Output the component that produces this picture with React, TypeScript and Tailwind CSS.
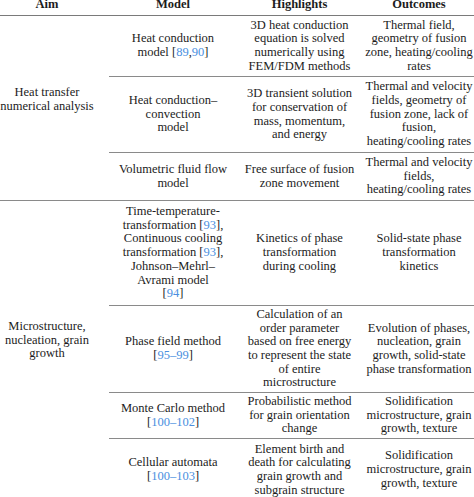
import type { ReactNode } from "react";

const serif = { fontFamily: '"Liberation Serif", "Times New Roman", serif' };

function Ref({ children }: { children: ReactNode }) {
  return <span className="text-[#4a8fe0]">{children}</span>;
}

interface Row {
  h: string;
  model: ReactNode;
  highlights: string[];
  outcomes: string[];
}

const lines = (items: ReactNode[]) =>
  items.map((l, i) => (
    <span key={i} className="block">
      {l}
    </span>
  ));

const groupOne: Row[] = [
  {
    h: "h-[61px]",
    model: lines([
      "Heat conduction",
      <>
        model [<Ref>89</Ref>,<Ref>90</Ref>]
      </>,
    ]),
    highlights: ["3D heat conduction", "equation is solved", "numerically using", "FEM/FDM methods"],
    outcomes: ["Thermal field,", "geometry of fusion", "zone, heating/cooling", "rates"],
  },
  {
    h: "h-[76px]",
    model: lines(["Heat conduction–", "convection", "model"]),
    highlights: ["3D transient solution", "for conservation of", "mass, momentum,", "and energy"],
    outcomes: [
      "Thermal and velocity",
      "fields, geometry of",
      "fusion zone, lack of",
      "fusion,",
      "heating/cooling rates",
    ],
  },
  {
    h: "h-[48px]",
    model: lines(["Volumetric fluid flow", "model"]),
    highlights: ["Free surface of fusion", "zone movement"],
    outcomes: ["Thermal and velocity", "fields,", "heating/cooling rates"],
  },
];

const groupTwo: Row[] = [
  {
    h: "h-[105px]",
    model: lines([
      "Time-temperature-",
      <>
        transformation [<Ref>93</Ref>],
      </>,
      "Continuous cooling",
      <>
        transformation [<Ref>93</Ref>],
      </>,
      "Johnson–Mehrl–",
      "Avrami model",
      <>
        [<Ref>94</Ref>]
      </>,
    ]),
    highlights: ["Kinetics of phase", "transformation", "during cooling"],
    outcomes: ["Solid-state phase", "transformation", "kinetics"],
  },
  {
    h: "h-[87px]",
    model: lines([
      "Phase field method",
      <>
        [<Ref>95–99</Ref>]
      </>,
    ]),
    highlights: [
      "Calculation of an",
      "order parameter",
      "based on free energy",
      "to represent the state",
      "of entire",
      "microstructure",
    ],
    outcomes: ["Evolution of phases,", "nucleation, grain", "growth, solid-state", "phase transformation"],
  },
  {
    h: "h-[46px]",
    model: lines([
      "Monte Carlo method",
      <>
        [<Ref>100–102</Ref>]
      </>,
    ]),
    highlights: ["Probabilistic method", "for grain orientation", "change"],
    outcomes: ["Solidification", "microstructure, grain", "growth, texture"],
  },
  {
    h: "h-[62px]",
    model: lines([
      "Cellular automata",
      <>
        [<Ref>100–103</Ref>]
      </>,
    ]),
    highlights: ["Element birth and", "death for calculating", "grain growth and", "subgrain structure"],
    outcomes: ["Solidification", "microstructure, grain", "growth, texture"],
  },
];

const cell = "align-middle text-center whitespace-nowrap p-0";

function Group({ aim, rows, aimPad, last }: { aim: string[]; rows: Row[]; aimPad: string; last?: boolean }) {
  return (
    <>
      {rows.map((row, i) => {
        const border = i === rows.length - 1 && last ? "" : "border-b border-[#8a8a8a]";
        return (
          <tr key={i}>
            {i === 0 && (
              <td
                rowSpan={rows.length}
                className={`${cell} align-top ${aimPad} ${last ? "" : "border-b border-[#8a8a8a]"}`}
              >
                {lines(aim)}
              </td>
            )}
            <td className={`${cell} ${row.h} ${border}`}>{row.model}</td>
            <td className={`${cell} ${row.h} ${border}`}>{lines(row.highlights)}</td>
            <td className={`${cell} ${row.h} ${border}`}>{lines(row.outcomes)}</td>
          </tr>
        );
      })}
    </>
  );
}

export default function App() {
  return (
    <div className="w-[474px] h-[497px] overflow-hidden bg-white">
      <table
        style={serif}
        className="-ml-[15px] -mt-[2px] border-separate border-spacing-0 table-fixed w-[491px] text-[12.5px] leading-[13.7px] text-[#1c1c1c]"
      >
        <colgroup>
          <col className="w-[124px]" />
          <col className="w-[128px]" />
          <col className="w-[125px]" />
          <col className="w-[114px]" />
        </colgroup>
        <thead>
          <tr>
            {["Aim", "Model", "Highlights", "Outcomes"].map((h) => (
              <th
                key={h}
                className="h-[18px] p-0 pb-[3px] align-bottom text-center font-bold border-b border-[#7a7a7a]"
              >
                {h}
              </th>
            ))}
          </tr>
        </thead>
        <tbody>
          <Group aim={["Heat transfer", "numerical analysis"]} rows={groupOne} aimPad="pt-[70px]" />
          <Group aim={["Microstructure,", "nucleation, grain", "growth"]} rows={groupTwo} aimPad="pt-[119px]" last />
        </tbody>
      </table>
    </div>
  );
}
